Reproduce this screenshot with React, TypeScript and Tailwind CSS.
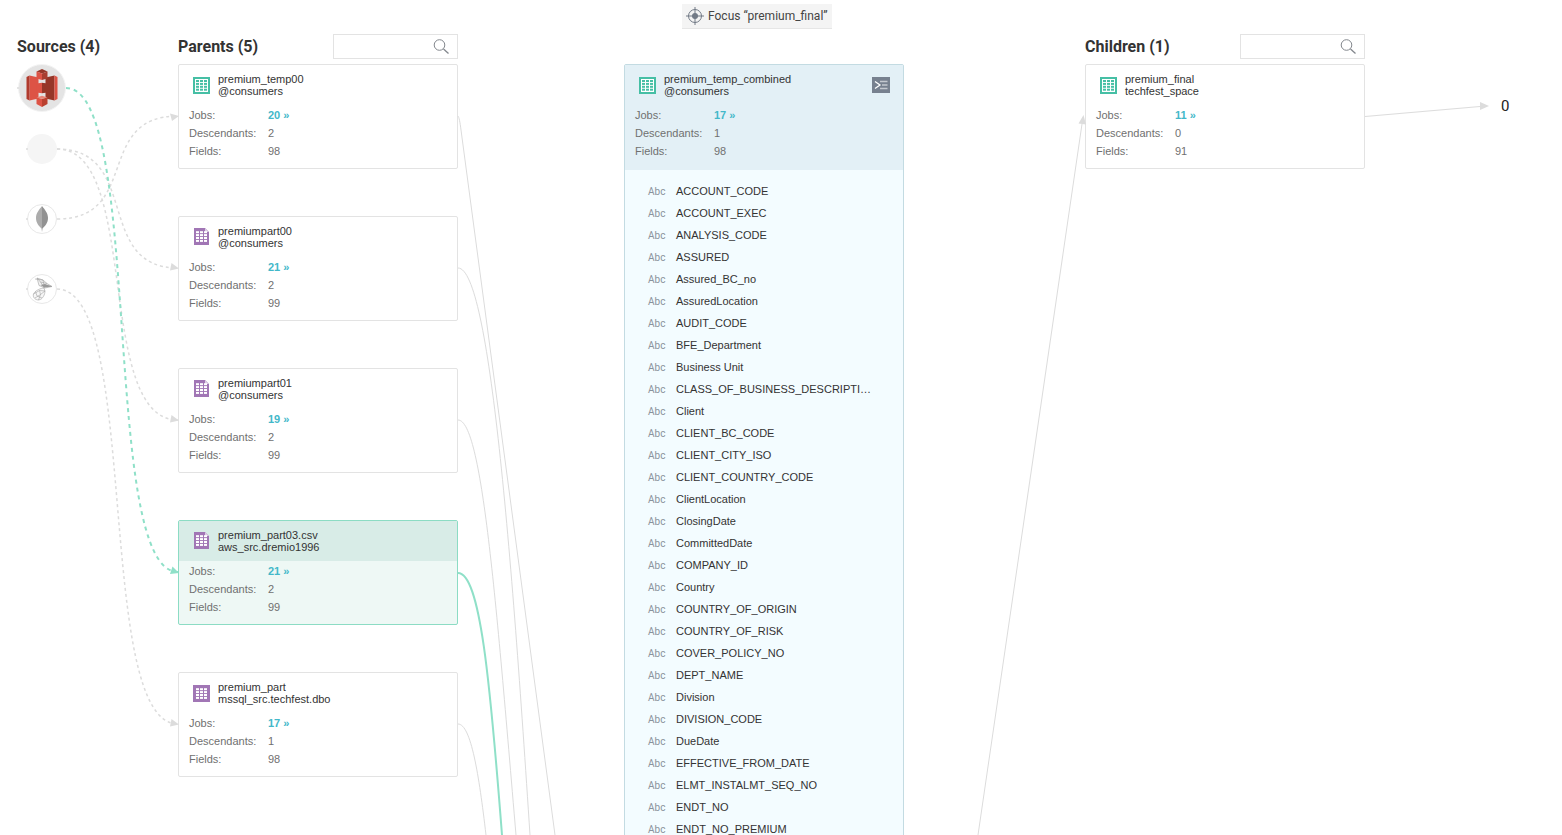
import React from "react";

type Kind = "view" | "file" | "table";

interface Dataset {
  name: string;
  path: string;
  kind: Kind;
  jobs: number;
  descendants: number;
  fields: number;
  active?: boolean;
}

const parents: Dataset[] = [
  { name: "premium_temp00", path: "@consumers", kind: "view", jobs: 20, descendants: 2, fields: 98 },
  { name: "premiumpart00", path: "@consumers", kind: "file", jobs: 21, descendants: 2, fields: 99 },
  { name: "premiumpart01", path: "@consumers", kind: "file", jobs: 19, descendants: 2, fields: 99 },
  { name: "premium_part03.csv", path: "aws_src.dremio1996", kind: "file", jobs: 21, descendants: 2, fields: 99, active: true },
  { name: "premium_part", path: "mssql_src.techfest.dbo", kind: "table", jobs: 17, descendants: 1, fields: 98 },
];

const current: Dataset = {
  name: "premium_temp_combined", path: "@consumers", kind: "view", jobs: 17, descendants: 1, fields: 98,
};

const child: Dataset = {
  name: "premium_final", path: "techfest_space", kind: "view", jobs: 11, descendants: 0, fields: 91,
};

const fields = [
  "ACCOUNT_CODE", "ACCOUNT_EXEC", "ANALYSIS_CODE", "ASSURED", "Assured_BC_no", "AssuredLocation",
  "AUDIT_CODE", "BFE_Department", "Business Unit", "CLASS_OF_BUSINESS_DESCRIPTI…", "Client",
  "CLIENT_BC_CODE", "CLIENT_CITY_ISO", "CLIENT_COUNTRY_CODE", "ClientLocation", "ClosingDate",
  "CommittedDate", "COMPANY_ID", "Country", "COUNTRY_OF_ORIGIN", "COUNTRY_OF_RISK",
  "COVER_POLICY_NO", "DEPT_NAME", "Division", "DIVISION_CODE", "DueDate", "EFFECTIVE_FROM_DATE",
  "ELMT_INSTALMT_SEQ_NO", "ENDT_NO", "ENDT_NO_PREMIUM",
];

function DatasetIcon({ kind }: { kind: Kind }) {
  const cells = [];
  const fill = kind === "view" ? "#46bfa5" : "#fff";
  const top = kind === "view" ? 3 : 3.2;
  for (let r = 0; r < 4; r++)
    for (let c = 0; c < 3; c++)
      cells.push(
        <rect key={`${r}-${c}`} x={3 + c * 4} y={top + r * 2.9} width="3" height="2" fill={fill} />
      );
  return (
    <svg width="17" height="17" viewBox="0 0 17 17" className="shrink-0" aria-hidden="true">
      {kind === "view" && (
        <>
          <rect width="17" height="17" fill="#46bfa5" />
          <rect x="2" y="2" width="13" height="13" fill="#fff" />
        </>
      )}
      {kind === "file" && (
        <>
          <path d="M1 0H12L16 4V17H1Z" fill="#a176b5" />
          <path d="M12 0V4H16Z" fill="#dccbe3" />
        </>
      )}
      {kind === "table" && <rect width="17" height="17" fill="#a176b5" />}
      {cells}
    </svg>
  );
}

function Title({ data }: { data: Dataset }) {
  return (
    <div className="flex items-start gap-2 pl-3.5">
      <div className={data.kind === "file" ? "pt-[3px]" : "pt-1"}>
        <DatasetIcon kind={data.kind} />
      </div>
      <div className="leading-3 text-[#333]">
        <div>{data.name}</div>
        <div>{data.path}</div>
      </div>
    </div>
  );
}

function Stats({ data }: { data: Dataset }) {
  return (
    <dl className="grid grid-cols-[79px_1fr] pt-px pl-2.5 leading-[18px] text-[#707070]">
      <dt>Jobs:</dt>
      <dd>
        <a href="#jobs" className="font-bold text-[#43b8c9]">{data.jobs} »</a>
      </dd>
      <dt>Descendants:</dt>
      <dd>{data.descendants}</dd>
      <dt>Fields:</dt>
      <dd>{data.fields}</dd>
    </dl>
  );
}

function Card({ data }: { data: Dataset }) {
  return (
    <article
      className={
        data.active
          ? "h-[105px] rounded-xs border border-[#8cdcc4] bg-[#eef8f5]"
          : "h-[105px] rounded-xs border border-[#e3e3e3] bg-white"
      }
    >
      <div className={data.active ? "h-10 bg-[#d8ece7] pt-2" : "h-10 pt-2"}>
        <Title data={data} />
      </div>
      <Stats data={data} />
    </article>
  );
}

function ColumnHeader({ title, label }: { title: string; label: string }) {
  return (
    <header className="flex h-16 items-end justify-between pb-[5px]">
      <h2 className="font-[Roboto] text-base leading-6 font-bold text-[#333]">{title}</h2>
      <label className="flex h-[25px] w-[125px] items-center border border-[#e3e3e3] bg-white pr-2">
        <input type="text" aria-label={label} className="h-full min-w-0 flex-1 px-2 outline-none" />
        <svg width="16" height="16" viewBox="0 0 16 16" fill="none" stroke="#83878d" aria-hidden="true">
          <circle cx="6.500" cy="6" r="5.300" />
          <path d="M10.500 10L15.500 14.500" strokeWidth="1.300" />
        </svg>
      </label>
    </header>
  );
}

function S3Icon() {
  return (
    <svg width="32" height="38" viewBox="0 0 32 38" aria-hidden="true">
      <path d="M3.500 6.500L12.500 8.500V29.500L3.500 31.500Z" fill="#dd5345" />
      <path d="M0.500 8L3.500 6.500V31.500L0.500 30Z" fill="#b03a2d" />
      <path d="M28.500 6.500L19.500 8.500V29.500L28.500 31.500Z" fill="#963628" />
      <path d="M31.500 8L28.500 6.500V31.500L31.500 30Z" fill="#dd5345" />
      <path d="M10.500 2.500L16 0L21.500 2.500L16 4.500Z" fill="#963628" />
      <path d="M10.500 2.500L16 4.500V11L10.500 9.500Z" fill="#dd5345" />
      <path d="M21.500 2.500L16 4.500V11L21.500 9.500Z" fill="#a83d2f" />
      <path d="M10.500 14.500L16 13.800V24.200L10.500 23.500Z" fill="#dd5345" />
      <path d="M21.500 14.500L16 13.800V24.200L21.500 23.500Z" fill="#963628" />
      <path d="M10.500 28.500L16 29.800V38L10.500 35Z" fill="#dd5345" />
      <path d="M21.500 28.500L16 29.800V38L21.500 35Z" fill="#b9402f" />
      <path d="M10.500 28.500L16 26.800L21.500 28.500L16 29.800Z" fill="#e98476" />
    </svg>
  );
}

function MongoIcon() {
  return (
    <svg width="14" height="26" viewBox="0 0 14 26" aria-hidden="true">
      <path d="M7 0C4 4 1 7 1 12C1 17 4 20 6.500 22.500L7 26Z" fill="#acacac" />
      <path d="M7 0C10 4 13 7 13 12C13 17 10 20 7.500 22.500L7 26Z" fill="#929292" />
    </svg>
  );
}

function SqlServerIcon() {
  return (
    <svg width="22" height="24" viewBox="0 0 22 24" fill="none" stroke="#a2a2a2" strokeWidth="0.600" aria-hidden="true">
      <path d="M6 1L12 3L16 6.500L21 9.500L14 11L8 8.500L6 1Z" fill="#f0f0f0" />
      <path d="M6 1L9.500 5L13.500 11M4 2L12 3M9.500 5L16 6.500M12 3L13 8L21 9.500" />
      <path d="M9.500 8L14 7L21 9.500L13.500 10.500Z" fill="#989898" stroke="none" />
      <path d="M13 11C10 11 4 13.500 2.500 17C1.500 20 4 23 7.500 23C12 22.500 14 17 14 14L13 11Z" fill="#f7f7f7" />
      <path d="M2.500 17L8.500 13.500L14 14M4 21L9.500 17.500L14 14M8.500 13.500L9.500 17.500L7.500 23M4.500 14.500L6 19L11 21" />
    </svg>
  );
}

function Edges() {
  return (
    <svg
      className="pointer-events-none absolute top-0 left-0 h-[835px] w-[1562px]"
      viewBox="0 0 1562 835"
      fill="none"
      aria-hidden="true"
    >
      <g stroke="#dcdcdc" strokeWidth="1.500" strokeDasharray="3 3">
        <path d="M57 149C141 149 94 268 178 268" />
        <path d="M57 149C141 149 94 420 178 420" />
        <path d="M57 219C141 219 94 116 178 116" />
        <path d="M57 289C141 289 94 724 178 724" />
      </g>
      <path d="M66 88C144 88 100 572 178 572" stroke="#8fe0c8" strokeWidth="2" strokeDasharray="4 4" />
      <g fill="#dcdcdc">
        <path d="M179 116L170 113.500L172 121Z" />
        <path d="M179 268.500L171.500 263L170 270.500Z" />
        <path d="M179 420.500L171.500 415L170 422.500Z" />
        <path d="M179 724.500L171.500 719L170 726.500Z" />
        <path d="M1083.500 115L1078.500 123.500L1086 124.500Z" />
        <path d="M1489 106L1480 102V110Z" />
        <circle cx="18" cy="88" r="1" />
        <circle cx="27" cy="149" r="1" />
        <circle cx="27" cy="219" r="1" />
        <circle cx="27" cy="289" r="1" />
      </g>
      <path d="M179 573L172.500 566.500L170 574Z" fill="#8fe0c8" />
      <g stroke="#dcdcdc">
        <path d="M458 116C459 117 460 122 461 130L555 835" />
        <path d="M458 268C490 268 512 560 530 835" />
        <path d="M458 420C482 420 496 600 516 835" />
        <path d="M458 724C471 724 479 775 486 835" />
        <path d="M978 835L1082 124" />
        <path d="M1365 116.500L1480 106.500" />
      </g>
      <path d="M458 573C480 573 490 680 502 835" stroke="#8fe0c8" strokeWidth="2" />
    </svg>
  );
}

export default function App() {
  return (
    <main className="relative flex h-screen overflow-hidden bg-white pl-[17px] font-['Liberation_Sans',sans-serif] text-[11px]">
      <section className="w-[161px] shrink-0">
        <header className="flex h-16 items-end pb-[5px]">
          <h2 className="font-[Roboto] text-base leading-6 font-bold text-[#333]">Sources (4)</h2>
        </header>
        <ul className="flex w-[50px] flex-col items-center gap-10">
          <li className="-mb-[18px] flex size-12 items-center justify-center rounded-full border border-[#f4f4f4] bg-[#e4e4e4]">
            <S3Icon />
          </li>
          <li className="size-[30px] rounded-full bg-[#f5f5f5]" />
          <li className="flex size-[30px] items-center justify-center rounded-full border border-[#e8e8e8]">
            <MongoIcon />
          </li>
          <li className="flex size-[30px] items-center justify-center rounded-full border border-[#e8e8e8]">
            <SqlServerIcon />
          </li>
        </ul>
      </section>

      <section className="w-[280px] shrink-0">
        <ColumnHeader title="Parents (5)" label="Search parents" />
        <div className="flex flex-col gap-[47px]">
          {parents.map((p) => (
            <Card key={p.name} data={p} />
          ))}
        </div>
      </section>

      <section className="ml-[166px] w-[280px] shrink-0">
        <div className="h-16 pt-1 pl-[58px]">
          <button
            type="button"
            className="flex h-[25px] w-[150px] items-center gap-1 border-b border-[#e6e6e6] bg-[#f4f4f4] pl-1 font-[Roboto] text-xs whitespace-nowrap text-[#444]"
          >
            <svg width="18" height="18" viewBox="0 0 18 18" fill="none" stroke="#727a86" className="shrink-0" aria-hidden="true">
              <circle cx="9" cy="9" r="6.500" />
              <circle cx="9" cy="9" r="3" fill="#727a86" stroke="none" />
              <path d="M9 0V18M0 9H18" />
            </svg>
            Focus “premium_final”
          </button>
        </div>
        <article className="rounded-xs border border-[#c3dbe2] bg-[#f3fcff]">
          <div className="h-[105px] bg-[#e3f0f6]">
            <div className="flex h-10 items-start justify-between pt-2 pr-[13px]">
              <Title data={current} />
              <button type="button" aria-label="Show query" className="mt-1">
                <svg width="18" height="16" viewBox="0 0 18 16" fill="none" aria-hidden="true">
                  <rect width="18" height="16" fill="#77818f" />
                  <path d="M3 4.500L8 8L3 11.500" stroke="#fff" strokeWidth="1.300" />
                  <path d="M8 4.500H15.500M10 8H15.500M8 11.500H15.500" stroke="#c3c8cf" strokeWidth="1.500" />
                </svg>
              </button>
            </div>
            <Stats data={current} />
          </div>
          <ul className="pt-2.5">
            {fields.map((f) => (
              <li key={f} className="flex h-[22px] items-center gap-2.5 pl-[23px] whitespace-nowrap text-[#333]">
                <span className="w-[18px] shrink-0 font-[Roboto] text-[10px] text-[#8a929c]">Abc</span>
                <span>{f}</span>
              </li>
            ))}
          </ul>
        </article>
      </section>

      <section className="ml-[181px] w-[280px] shrink-0">
        <ColumnHeader title="Children (1)" label="Search children" />
        <Card data={child} />
      </section>

      <div className="pt-[94px] pl-[136px] font-[Roboto] text-[15px] leading-6 text-[#222]">0</div>
      <Edges />
    </main>
  );
}
